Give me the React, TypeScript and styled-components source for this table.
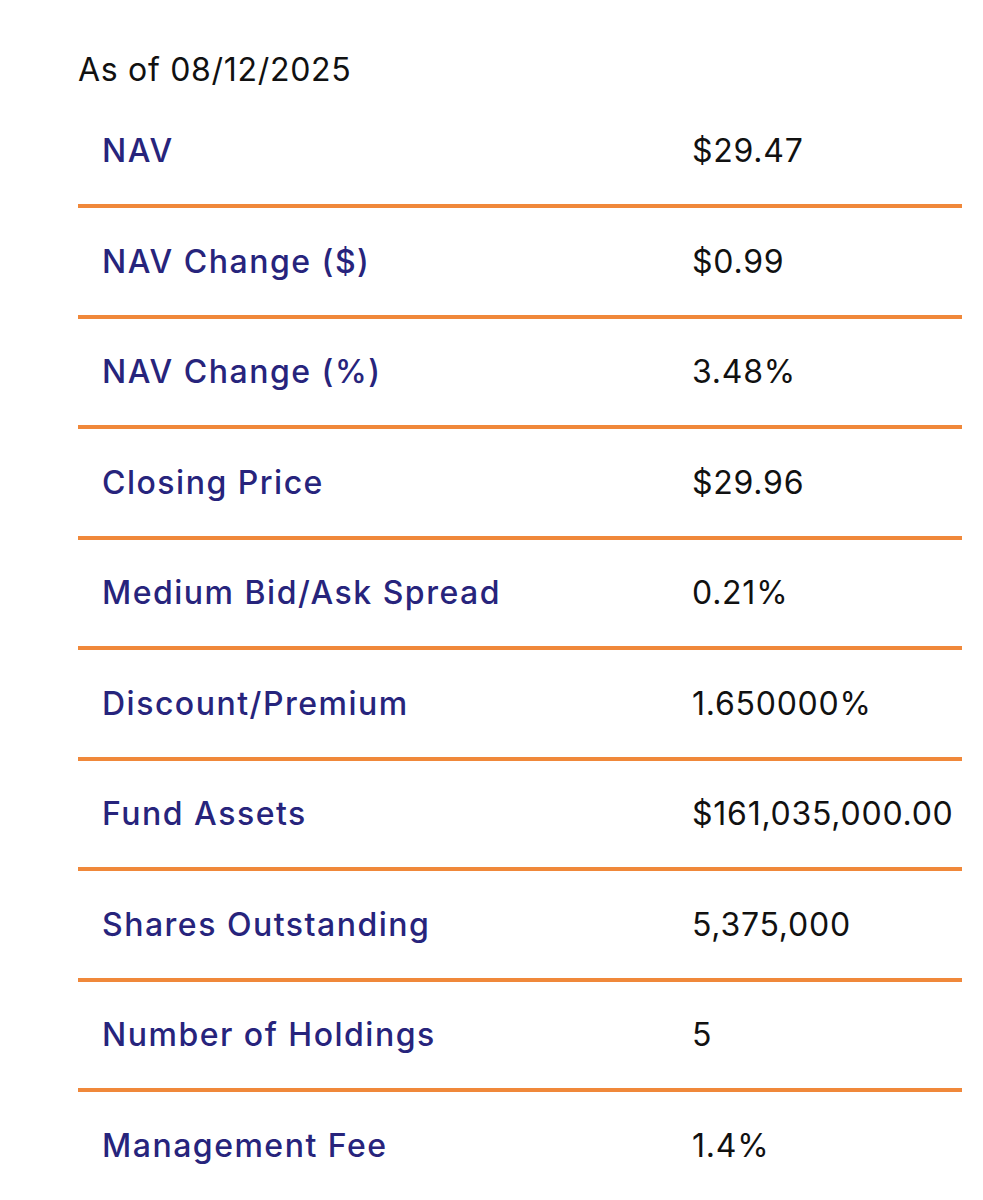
import React from "react";
import styled, { createGlobalStyle } from "styled-components";

const Global = createGlobalStyle`
  html, body { margin: 0; padding: 0; background: #ffffff; }
  body { font-family: Inter, "Open Sans", sans-serif; }
`;

const Page = styled.div`
  width: 884px;
  margin-left: 78px;
  padding-top: 50px;
`;

const AsOf = styled.div`
  font-size: 32px;
  line-height: 40px;
  color: #111111;
  font-weight: 400;
  letter-spacing: 0.7px;
  margin-bottom: 7.5px;
`;

const List = styled.div`
  display: flex;
  flex-direction: column;
`;

const Row = styled.div<{ $last?: boolean }>`
  display: grid;
  grid-template-columns: 614px 1fr;
  align-items: center;
  height: 106.5px;
  border-bottom: ${(p) => (p.$last ? "none" : "4px solid #F0883A")};
`;

const Label = styled.div`
  padding-left: 24px;
  font-size: 32px;
  font-weight: 500;
  color: #27247C;
  letter-spacing: 1.5px;
`;

const Value = styled.div`
  font-size: 32px;
  font-weight: 400;
  color: #111111;
  letter-spacing: 0.75px;
  white-space: nowrap;
`;

const rows: [string, string][] = [
  ["NAV", "$29.47"],
  ["NAV Change ($)", "$0.99"],
  ["NAV Change (%)", "3.48%"],
  ["Closing Price", "$29.96"],
  ["Medium Bid/Ask Spread", "0.21%"],
  ["Discount/Premium", "1.650000%"],
  ["Fund Assets", "$161,035,000.00"],
  ["Shares Outstanding", "5,375,000"],
  ["Number of Holdings", "5"],
  ["Management Fee", "1.4%"],
];

export default function App() {
  return (
    <>
      <Global />
      <Page>
        <AsOf>As of 08/12/2025</AsOf>
        <List>
          {rows.map(([l, v], i) => (
            <Row key={l} $last={i === rows.length - 1}>
              <Label>{l}</Label>
              <Value>{v}</Value>
            </Row>
          ))}
        </List>
      </Page>
    </>
  );
}
